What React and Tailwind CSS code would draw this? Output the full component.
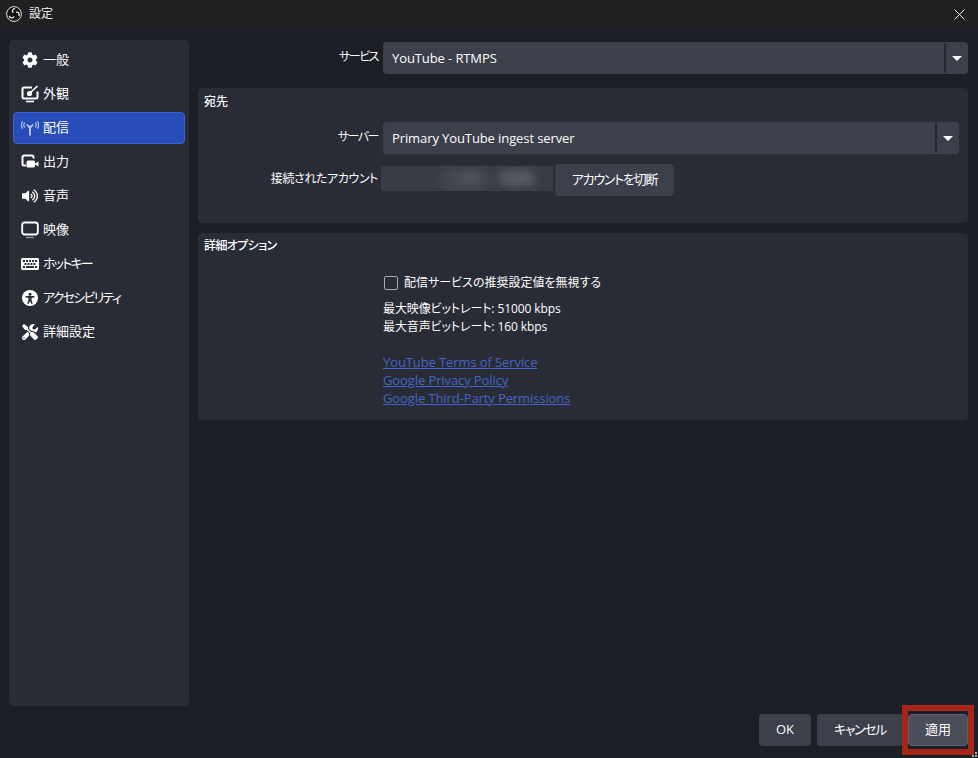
import { FaCog, FaVolumeUp, FaKeyboard, FaTools } from 'react-icons/fa';

const AppearanceIcon = () => (
  <svg width="18" height="18" viewBox="0 0 18 18" fill="none">
    <path d="M11 2.500H3A1.500 1.500 0 0 0 1.500 4v8A1.500 1.500 0 0 0 3 13.500h12a1.500 1.500 0 0 0 1.500-1.500V6.500" stroke="#fff" strokeWidth="2" />
    <circle cx="8.500" cy="8.500" r="2.600" fill="#fff" />
    <path d="M9.500 7.500 16.500 1" stroke="#fff" strokeWidth="1.600" />
    <path d="M5 16.500h8" stroke="#fff" strokeWidth="1.600" />
  </svg>
);

const StreamIcon = () => (
  <svg width="18" height="16" viewBox="0 0 18 16" fill="none" stroke="#b4c4f0" strokeWidth="1.200">
    <path d="M9 5.500V15.500" strokeWidth="2" />
    <path d="M5.800 4.500 9 8l3.200-3.500" strokeWidth="1.800" />
    <path d="M3.600 2.500C2.600 4 2.600 6 3.600 7.500" />
    <path d="M1.600 1.200C.2 3.400.2 6.600 1.600 8.800" />
    <path d="M14.400 2.500c1 1.500 1 3.500 0 5" />
    <path d="M16.400 1.200c1.400 2.200 1.400 5.400 0 7.600" />
  </svg>
);

const OutputIcon = () => (
  <svg width="18" height="16" viewBox="0 0 18 16" fill="none">
    <path d="M5 11.500H3A1.500 1.500 0 0 1 1.500 10V3A1.500 1.500 0 0 1 3 1.500h8A1.500 1.500 0 0 1 12.500 3v1.500" stroke="#fff" strokeWidth="2" />
    <rect x="5.500" y="6.500" width="8.500" height="7" rx="1.500" fill="#fff" />
    <path d="M14 9.500l3.500-2v5l-3.500-2z" fill="#fff" />
  </svg>
);

const VideoIcon = () => (
  <svg width="18" height="18" viewBox="0 0 18 18" fill="none">
    <rect x="1.200" y="1.500" width="15.600" height="12" rx="2.500" stroke="#fff" strokeWidth="1.800" />
    <path d="M5 16.500h8" stroke="#9a9ca3" strokeWidth="1.200" />
  </svg>
);

const AccessIcon = () => (
  <svg width="16" height="16" viewBox="0 0 16 16">
    <circle cx="8" cy="8" r="8" fill="#fff" />
    <circle cx="8" cy="4.200" r="1.500" fill="#292c35" />
    <path d="M3.500 6h9v1.300l-3 .6V10l1.300 3.500-1.300.5L8 11l-1.500 3-1.300-.5L6.500 10V7.900l-3-.6z" fill="#292c35" />
  </svg>
);

const ObsLogo = () => (
  <svg width="16" height="16" viewBox="0 0 16 16" fill="none">
    <circle cx="8" cy="8" r="7.400" stroke="#e4e4e4" strokeWidth="1" fill="#141414" />
    <path d="M9.200 2.600C6.600 2.400 5.600 5.200 7.300 6.600" stroke="#e4e4e4" strokeWidth="1.400" />
    <path d="M3.200 10c.9 2.400 3.900 2.500 4.700.4" stroke="#e4e4e4" strokeWidth="1.400" />
    <path d="M12.800 10.200c1.300-2.300-.5-4.700-2.800-3.900" stroke="#e4e4e4" strokeWidth="1.400" />
  </svg>
);

const navItems = [
  { label: '一般', icon: <FaCog size={16} color="#fff" /> },
  { label: '外観', icon: <AppearanceIcon /> },
  { label: '配信', icon: <StreamIcon />, active: true },
  { label: '出力', icon: <OutputIcon /> },
  { label: '音声', icon: <FaVolumeUp size={16} color="#fff" /> },
  { label: '映像', icon: <VideoIcon /> },
  { label: 'ホットキー', icon: <FaKeyboard size={18} color="#fff" />, tight: 'tracking-[-1.8px]' },
  { label: 'アクセシビリティ', icon: <AccessIcon />, tight: 'tracking-[-1.75px]' },
  { label: '詳細設定', icon: <FaTools size={16} color="#fff" /> },
];

function Combo({ value }) {
  return (
    <div className="flex-1 h-[32px] flex rounded-[4px] bg-[#3c404b]">
      <div className="flex-1 flex items-center pl-[9px] pt-[2px] text-[13px] tracking-[-0.1px] text-[#fefefe]">{value}</div>
      <div className="w-[24px] my-[1px] border-l-2 border-[#262932] flex items-center justify-center">
        <div className="w-0 h-0 border-x-[5px] border-x-transparent border-t-[5px] border-t-white" />
      </div>
    </div>
  );
}

function Button({ children, className }) {
  return (
    <div className={`h-[32px] flex items-center justify-center rounded-[4px] bg-[#3c404b] text-[13px] text-[#fefefe] ${className}`}>
      {children}
    </div>
  );
}

export default function App() {
  return (
    <div className="w-[978px] h-[758px] flex flex-col overflow-hidden bg-[#1d1f26] text-[#fefefe] text-[13px] [font-feature-settings:'palt'] font-['Open_Sans','Noto_Sans_CJK_JP',sans-serif]">
      <div className="h-[28px] shrink-0 flex items-center bg-[#202020] pl-[6px] pr-[13px]">
        <ObsLogo />
        <span className="ml-[7px] text-[12px] text-[#eeeeee]">設定</span>
        <svg className="ml-auto" width="11" height="11" viewBox="0 0 11 11" stroke="#e8e8e8" strokeWidth="1">
          <path d="M.5.500l10 10M10.500.500l-10 10" />
        </svg>
      </div>

      <div className="flex-1 flex min-h-0 pl-[9px] pr-[10px] pt-[12px]">
        <div className="w-[180px] rounded-[4px] bg-[#292c35] p-[4px] flex flex-col gap-[2px]">
          {navItems.map((item) => (
            <div
              key={item.label}
              className={`h-[32px] flex items-center rounded-[4px] border ${item.active ? 'bg-[#284cb8] border-[#3e62cc]' : 'border-transparent'}`}
            >
              <div className="w-[29px] flex justify-center shrink-0 pl-[2px]">{item.icon}</div>
              <span className={`text-[13px] ${item.tight || ''}`}>{item.label}</span>
            </div>
          ))}
        </div>

        <div className="flex-1 ml-[9px] flex flex-col">
          <div className="flex items-center mt-[2px] h-[32px]">
            <div className="w-[180px] text-right text-[12px] tracking-[-1.5px] -mt-[3px]">サービス</div>
            <div className="w-[5px]" />
            <Combo value="YouTube - RTMPS" />
          </div>

          <div className="mt-[14px] h-[135px] rounded-[4px] bg-[#292c35] flex flex-col">
            <div className="pl-[6px] pt-[5px] h-[34px] text-[12px] font-medium">宛先</div>
            <div className="flex items-center h-[32px] pr-[9px]">
              <div className="w-[180px] text-right text-[12px] tracking-[-1.5px] -mt-[3px]">サーバー</div>
              <div className="w-[5px]" />
              <Combo value="Primary YouTube ingest server" />
            </div>
            <div className="flex items-center h-[32px] mt-[10px]">
              <div className="w-[180px] text-right text-[12px] tracking-[-0.4px] -mt-[3px]">接続されたアカウント</div>
              <div className="relative ml-[3px] w-[172px] h-[25px] -mt-[3px] overflow-hidden bg-[#3a3c45]">
                <div className="absolute left-[60px] top-[4px] w-[50px] h-[18px] rounded-full bg-[#484a53] blur-[6px]" />
                <div className="absolute left-[78px] top-[6px] w-[20px] h-[12px] rounded-full bg-[#51535b] blur-[5px]" />
                <div className="absolute left-[118px] top-[4px] w-[36px] h-[16px] rounded-full bg-[#585a62] blur-[5px]" />
              </div>
              <Button className="ml-[2px] w-[119px] tracking-[-1.2px]">アカウントを切断</Button>
            </div>
          </div>

          <div className="mt-[10px] h-[187px] rounded-[4px] bg-[#292c35] flex flex-col">
            <div className="pl-[6px] pt-[4px] h-[42px] text-[12px] font-medium tracking-[-0.6px]">詳細オプション</div>
            <div className="pl-[185px] flex flex-col leading-[18px]">
              <div className="flex items-center h-[14px] mb-[10px] pt-[1px]">
                <div className="ml-[1px] w-[14px] h-[14px] rounded-[2px] border border-[#a8a9ad] shrink-0" />
                <span className="ml-[6px] text-[12px]">配信サービスの推奨設定値を無視する</span>
              </div>
              <div className="text-[12px] tracking-[-0.1px] pt-[1px] h-[18px]">最大映像ビットレート: 51000 kbps</div>
              <div className="text-[12px] tracking-[-0.1px] pt-[1px] h-[18px]">最大音声ビットレート: 160 kbps</div>
              <div className="h-[18px]" />
              <a className="text-[13px] tracking-[-0.1px] text-[#4464c8] underline w-fit">YouTube Terms of Service</a>
              <a className="text-[13px] tracking-[-0.1px] text-[#4464c8] underline w-fit">Google Privacy Policy</a>
              <a className="text-[13px] tracking-[-0.1px] text-[#4464c8] underline w-fit">Google Third-Party Permissions</a>
            </div>
          </div>
        </div>
      </div>

      <div className="relative h-[32px] shrink-0 mt-[8px] mb-[12px] pr-[10px] flex justify-end">
        <Button className="w-[52px]">OK</Button>
        <Button className="ml-[6px] w-[86px] tracking-[-1.4px]">キャンセル</Button>
        <div className="relative ml-[5px] w-[60px]">
          <Button className="w-[60px] bg-[#4a4e5b] border border-[#5c6270]">適用</Button>
          <div className="absolute -left-[6px] -top-[9px] w-[72px] h-[50px] border-[6px] border-[#a72418]" />
        </div>
        <div className="absolute right-[1px] -bottom-[11px] grid grid-cols-3 gap-[1px]">
          <div className="col-start-3 w-[2px] h-[2px] bg-[#aaaaaa]" />
          <div className="col-start-2 w-[2px] h-[2px] bg-[#aaaaaa]" />
          <div className="w-[2px] h-[2px] bg-[#aaaaaa]" />
        </div>
      </div>
    </div>
  );
}
